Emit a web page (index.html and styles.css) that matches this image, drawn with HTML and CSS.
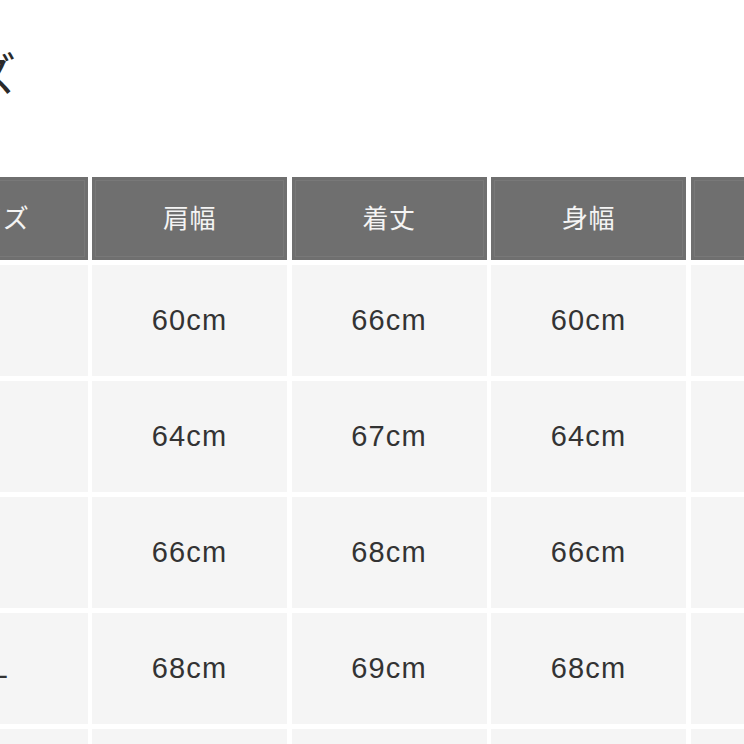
FILE: index.html
```html
<!DOCTYPE html>
<html lang="ja">
<head>
<meta charset="utf-8">
<link rel="stylesheet" href="styles.css">
</head>
<body>
<div class="page">
  <h1 class="title">サイズ</h1>
  <div class="table">
    <div class="cell head">サイズ</div>
    <div class="cell head">肩幅</div>
    <div class="cell head">着丈</div>
    <div class="cell head">身幅</div>
    <div class="cell head">袖丈</div>

    <div class="cell">S</div>
    <div class="cell">60cm</div>
    <div class="cell">66cm</div>
    <div class="cell">60cm</div>
    <div class="cell">58cm</div>

    <div class="cell">M</div>
    <div class="cell">64cm</div>
    <div class="cell">67cm</div>
    <div class="cell">64cm</div>
    <div class="cell">59cm</div>

    <div class="cell">L</div>
    <div class="cell">66cm</div>
    <div class="cell">68cm</div>
    <div class="cell">66cm</div>
    <div class="cell">60cm</div>

    <div class="cell">XL</div>
    <div class="cell">68cm</div>
    <div class="cell">69cm</div>
    <div class="cell">68cm</div>
    <div class="cell">61cm</div>

    <div class="cell">XXL</div>
    <div class="cell">70cm</div>
    <div class="cell">70cm</div>
    <div class="cell">70cm</div>
    <div class="cell">62cm</div>
  </div>
</div>
</body>
</html>
```

FILE: styles.css
```css
html, body {
  margin: 0;
  padding: 0;
  background: #ffffff;
}

body {
  width: 744px;
  height: 744px;
  overflow: hidden;
  font-family: "Liberation Sans", "Noto Sans CJK JP", sans-serif;
}

.page {
  margin-left: -107.5px;
}

.title {
  margin: 48px 0 0 -13px;
  font-family: "Noto Sans CJK JP", sans-serif;
  font-weight: 400;
  font-size: 46px;
  line-height: 46px;
  color: #2a2a2a;
}

.table {
  margin-top: 83px;
  display: grid;
  grid-template-columns: repeat(5, 195px);
  grid-template-rows: 83px repeat(5, 111px);
  column-gap: 4.5px;
  row-gap: 5px;
}

.cell {
  display: flex;
  align-items: center;
  justify-content: center;
  background: #f5f5f5;
  color: #333333;
  font-size: 29px;
  letter-spacing: 1.1px;
}

.cell.head {
  padding-bottom: 5px;
  box-sizing: border-box;
  background: #6f6f6f;
  color: #f4f4f4;
  font-family: "Noto Sans CJK JP", sans-serif;
  font-size: 26px;
  letter-spacing: 0.5px;
  box-shadow: inset 0 0 0 3px #6f6f6f, inset 0 0 0 4px #787878;
}
```
